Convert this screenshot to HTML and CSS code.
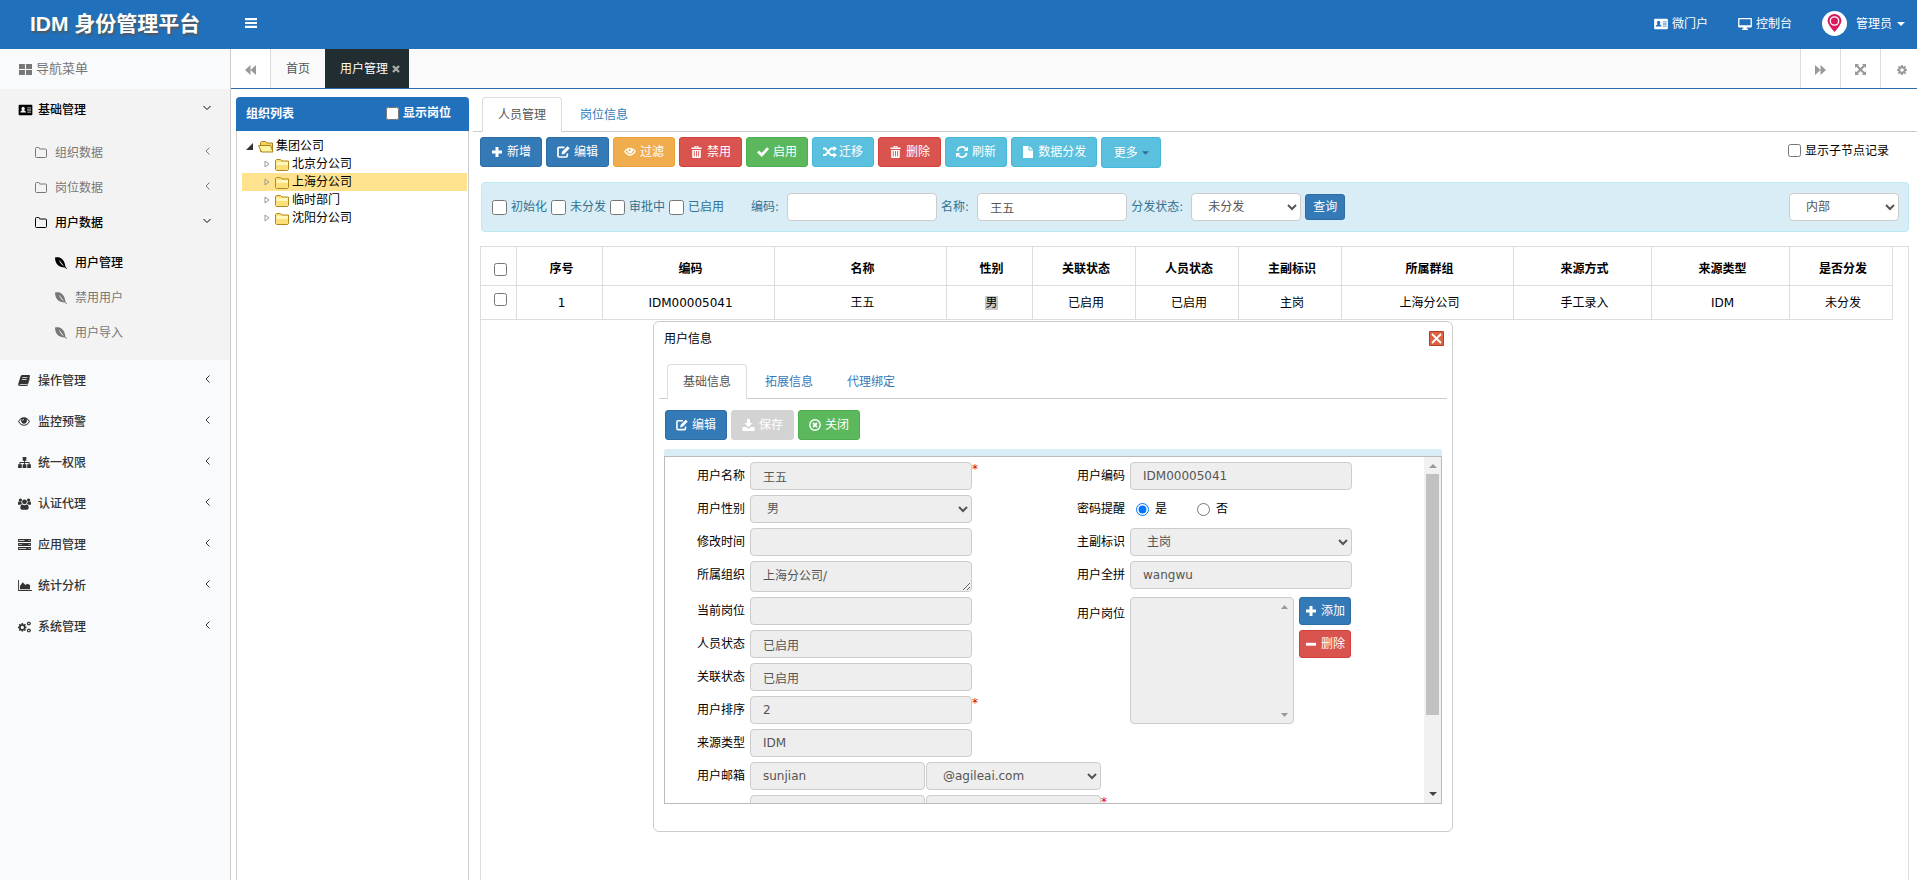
FILE: index.html
```html
<!DOCTYPE html>
<html lang="zh-CN">
<head>
<meta charset="utf-8">
<title>IDM 身份管理平台</title>
<link rel="stylesheet" href="styles.css">
</head>
<body>
<svg class="sprite" aria-hidden="true">
  <symbol id="card" viewBox="0 0 16 14"><path fill-rule="evenodd" d="M1 1h14a1 1 0 0 1 1 1v10a1 1 0 0 1-1 1H1a1 1 0 0 1-1-1V2a1 1 0 0 1 1-1zM2 10h6.500V9L7 7.500H6.500V7a2 2 0 1 0-2.500 0v.5h-.5L2 9zM10 4v1h4.500V4zM10 6.500v1h4.500v-1zM10 9v1h4.500V9z"/></symbol>
  <symbol id="screen" viewBox="0 0 16 14"><path fill-rule="evenodd" d="M1 0h14a1 1 0 0 1 1 1v9a1 1 0 0 1-1 1H10v1.500h1.500V14h-7v-1.500H6V11H1a1 1 0 0 1-1-1V1a1 1 0 0 1 1-1zM1.500 1.500v7h13v-7z"/></symbol>
  <symbol id="bars" viewBox="0 0 12 10"><path d="M0 0h12v2.200H0zM0 3.900h12v2.200H0zM0 7.800h12V10H0z"/></symbol>
  <symbol id="tiles" viewBox="0 0 12 10"><path d="M0 0h5.500v4.500H0zM6.500 0H12v4.500H6.500zM0 5.500h5.500V10H0zM6.500 5.500H12V10H6.500z"/></symbol>
  <symbol id="folder" viewBox="0 0 12 11"><path fill="none" stroke="currentColor" d="M.5 9.500v-8q0-1 1-1h2q1 0 1 1v.5h6q1 0 1 1v6.500q0 1-1 1h-9q-1 0-1-1z"/></symbol>
  <symbol id="leaf" viewBox="0 0 12 12"><path fill-rule="evenodd" d="M0 .5C5-.5 9.500 1.500 10.500 10L12 11.500l-.5.5-1.700-1.500C4 10.500 0 7 0 .5zM4 2.500C4.600 5 6.200 7.700 9 9.500 7.800 7.500 5.500 4.500 4 2.500z"/></symbol>
  <symbol id="book" viewBox="0 0 14 13"><path fill-rule="evenodd" d="M5 0h8q1.400.4 1 1.500L11.500 10q-.4 1-1.500 1H2.200q-.6.300 0 .9h8.800l2.500-8 .4.600-2.600 8q-.3.500-1 .5H2Q-.4 12.500.1 10.500L3 1.500Q3.600 0 5 0zM5.300 2.600 5 3.600h5.800l.3-1zM4.600 5l-.3 1h5.800l.3-1z"/></symbol>
  <symbol id="eye" viewBox="0 0 14 10"><path fill-rule="evenodd" d="M0 5Q3 0 7 0t7 5q-3 5-7 5T0 5zm1.300 0Q3.500 8.800 7 8.800T12.700 5Q11.500 3 10 2.200a3.500 3.500 0 1 1-6 0Q2.400 3 1.300 5zM7 2a2 2 0 0 0-2 2h.9A1.100 1.100 0 0 1 7 2.900z"/></symbol>
  <symbol id="sitemap" viewBox="0 0 14 12"><path d="M5 0h4v4H7.500v1.500H12.500V8H14v4h-4V8h1.500V6.500h-4V8H9v4H5V8h1.500V6.500h-4V8H4v4H0V8h1.500V5.500h5V4H5z"/></symbol>
  <symbol id="group" viewBox="0 0 15 13"><circle cx="2.800" cy="2" r="1.900"/><circle cx="12.200" cy="2" r="1.900"/><circle cx="7.500" cy="4" r="2.800"/><path d="M0 7V5q0-1.500 1-1.500L3.800 4q0 1.500.9 2.500Q3.500 6.500 2.600 7.500H1Q0 7.500 0 7zM15 7V5q0-1.500-1-1.500L11.200 4q0 1.500-.9 2.500 1.200 0 2.100 1H14q1 0 1-.5zM2.700 11Q2.700 7 5 7q2.500 1.600 5 0 2.300 0 2.300 4 0 2-2 2H4.700q-2 0-2-2z"/></symbol>
  <symbol id="server" viewBox="0 0 14 12"><path fill-rule="evenodd" d="M0 0h14v3.300H0zM0 4.300h14v3.400H0zM0 8.700h14V12H0zM1 1.300v.8h6v-.8zM1 5.600v.8h3.500v-.8zM1 10v.8h8V10zM11.500 1.200v1h1v-1zM11.500 5.500v1h1v-1zM11.500 9.900v1h1v-1z"/></symbol>
  <symbol id="chart" viewBox="0 0 15 12"><path d="M0 0h1v11h14v1H0zM2 10V6.500L5 2.500l3 3L10 4l3 1.500V10z"/></symbol>
  <symbol id="gear" viewBox="0 0 12 12"><path fill-rule="evenodd" d="M5 0h2l.3 1.600 1 .4L9.700 1 11 2.300 10 3.700l.4 1L12 5v2l-1.600.3-.4 1L11 9.700 9.700 11l-1.400-1-1 .4L7 12H5l-.3-1.600-1-.4L2.300 11 1 9.700l1-1.400-.4-1L0 7V5l1.600-.3.4-1L1 2.300 2.300 1l1.400 1 1-.4zM6 3.800a2.200 2.200 0 1 0 0 4.400 2.200 2.200 0 0 0 0-4.400z"/></symbol>
  <symbol id="gears" viewBox="0 0 15 13"><use href="#gear" x="0" y="2" width="10" height="10"/><use href="#gear" x="10" y="0" width="5" height="5"/><use href="#gear" x="10" y="8" width="5" height="5"/></symbol>
  <symbol id="left" viewBox="0 0 6 8"><path fill="none" stroke="currentColor" d="M4.500.5 1 4l3.500 3.500"/></symbol>
  <symbol id="down" viewBox="0 0 8 6"><path fill="none" stroke="currentColor" d="M.5 1 4 4.500 7.500 1"/></symbol>
  <symbol id="back" viewBox="0 0 11 10"><path d="M5.500 0v10L0 5zM11 0v10L5.500 5z"/></symbol>
  <symbol id="forward" viewBox="0 0 11 10"><path d="M0 0v10l5.500-5zM5.500 0v10L11 5z"/></symbol>
  <symbol id="expand" viewBox="0 0 11 11"><path d="M0 0h4L2.800 1.200l2.700 2.900 2.700-2.900L7 0h4v4L9.800 2.800 6.900 5.500l2.900 2.700L11 7v4H7l1.200-1.200-2.700-2.900-2.700 2.900L4 11H0V7l1.200 1.200 2.900-2.700-2.900-2.700L0 4z"/></symbol>
  <symbol id="times" viewBox="0 0 8 8"><path stroke="currentColor" stroke-width="2.400" d="m1 1 6 6M7 1 1 7"/></symbol>
  <symbol id="caret" viewBox="0 0 8 4"><path d="M0 0h8L4 4z"/></symbol>
  <symbol id="plus" viewBox="0 0 12 12"><path d="M4.500 1h3v3.500H11v3H7.500V11h-3V7.500H1v-3h3.500z"/></symbol>
  <symbol id="minus" viewBox="0 0 12 12"><path d="M1 4.800h10v2.900H1z"/></symbol>
  <symbol id="edit" viewBox="0 0 13 12"><path fill="none" stroke="currentColor" stroke-width="1.700" d="M7.500 1.300H2.300Q1 1.300 1 2.600v7.200Q1 11 2.300 11H9q1.300 0 1.300-1.200V7.500"/><path d="M5 5.800 10.500.2 12.800 2.300 7.200 8 4.500 8.600z"/></symbol>
  <symbol id="eyeopen" viewBox="0 0 13 12"><path fill-rule="evenodd" d="M0 5.500Q3 1.500 6.500 1.500T13 5.500Q10 10 6.500 10T0 5.500zm1.600 0Q4 8.500 6.500 8.500t4.900-3Q10.500 4.300 9.300 3.600a3 3 0 1 1-5.600 0Q2.600 4.300 1.600 5.500zM6.500 2.600a1.500 1.500 0 0 0-1.300 2.200l1.600.3.300-2z"/></symbol>
  <symbol id="trash" viewBox="0 0 12 12"><path fill-rule="evenodd" d="M4 1.500V0h4v1.500h3V3H1V1.500zM5 .8v.7h2V.8zM1.700 4h8.600v7q0 1-1 1H2.700q-1 0-1-1zM3.300 5v5.500h.9V5zM5.500 5v5.500h.9V5zM7.700 5v5.500h.9V5z"/></symbol>
  <symbol id="check" viewBox="0 0 12 12"><path d="M0 6.500 2 4.600l2.700 2.500L10 1.300l2 1.800L4.800 11z"/></symbol>
  <symbol id="shuffle" viewBox="0 0 14 12"><path fill="none" stroke="currentColor" stroke-width="1.800" d="M0 2.500h2.500L8 9h3M0 9h2.500L8 2.500h3"/><path d="M10.500 0 14 2.500 10.500 5.500zM10.500 6.500 14 9l-3.500 3z"/></symbol>
  <symbol id="refresh" viewBox="0 0 12 12"><path fill="none" stroke="currentColor" stroke-width="1.700" d="M1.300 5A4.800 4.800 0 0 1 10 3M10.700 7A4.800 4.800 0 0 1 2 9"/><path d="M12 .5V5H7.500zM0 11.500V7h4.500z"/></symbol>
  <symbol id="file" viewBox="0 0 10 12"><path d="M0 0h5.500v4.500H10V12H0zM6.500 0 10 3.500H6.500z"/></symbol>
  <symbol id="save" viewBox="0 0 12 12"><path d="M4.500 0h3v4H10L6 8.200 2 4h2.500zM0 8h3.500L6 10l2.500-2H12v4H0z"/></symbol>
  <symbol id="remove" viewBox="0 0 12 12"><circle cx="6" cy="6" r="5.200" fill="none" stroke="currentColor" stroke-width="1.400"/><path stroke="currentColor" stroke-width="1.800" d="m4 4 4 4M8 4 4 8"/></symbol>
  <symbol id="yellow" viewBox="0 0 15 13"><path fill="#fbe07a" stroke="#b08a20" d="M.5 11.500v-9l1-1h4l1.500 1.500h6.500v8.500l-1 1h-11z"/><path fill="#fff7b8" d="M1.500 4h11.500v3H1.500z"/></symbol>
  <symbol id="yellowopen" viewBox="0 0 16 13"><path fill="#f3d25e" stroke="#a8841c" d="M2.500 11.500v-9l1-1h4L9 3h5.500v8.500z"/><path fill="#fff2a0" stroke="#a8841c" d="M.5 5.500h12l2.500 6.500H3.500z"/></symbol>
</svg>

<header class="topbar">
  <h1 class="brand">IDM 身份管理平台</h1>
  <button class="plain" aria-label="菜单"><svg width="12" height="10"><use href="#bars"/></svg></button>
  <nav class="toplinks">
    <a href="#"><svg width="14" height="12"><use href="#card"/></svg>微门户</a>
    <a href="#"><svg width="14" height="12"><use href="#screen"/></svg>控制台</a>
    <a href="#" class="account">
      <svg width="25" height="25" viewBox="0 0 25 25"><circle cx="12.500" cy="12.500" r="12.500" fill="#fff"/><path fill="#d81b60" d="M12.500 21Q6 14 5.500 10a7 7 0 0 1 14 0Q19 14 12.500 21z"/><circle cx="12.500" cy="10" r="4.200" fill="none" stroke="#fff" stroke-width="1.300"/></svg>
      管理员<svg width="8" height="4"><use href="#caret"/></svg></a>
  </nav>
</header>

<div class="shell">
  <aside class="sidebar">
    <h2 class="navhead"><svg width="13" height="11"><use href="#tiles"/></svg>导航菜单</h2>
    <div class="open">
      <a href="#" class="item on"><svg width="15" height="12"><use href="#card"/></svg>基础管理<svg class="arrow" width="8" height="6"><use href="#down"/></svg></a>
      <div class="sub">
        <a href="#" class="item"><svg width="12" height="11"><use href="#folder"/></svg>组织数据<svg class="arrow" width="6" height="8"><use href="#left"/></svg></a>
        <a href="#" class="item"><svg width="12" height="11"><use href="#folder"/></svg>岗位数据<svg class="arrow" width="6" height="8"><use href="#left"/></svg></a>
        <a href="#" class="item on"><svg width="12" height="11"><use href="#folder"/></svg>用户数据<svg class="arrow" width="8" height="6"><use href="#down"/></svg></a>
        <div class="sub deep">
          <a href="#" class="item on"><svg width="12" height="12"><use href="#leaf"/></svg>用户管理</a>
          <a href="#" class="item"><svg width="12" height="12"><use href="#leaf"/></svg>禁用用户</a>
          <a href="#" class="item"><svg width="12" height="12"><use href="#leaf"/></svg>用户导入</a>
        </div>
      </div>
    </div>
    <a href="#" class="item"><svg width="12" height="11"><use href="#book"/></svg>操作管理<svg class="arrow" width="6" height="8"><use href="#left"/></svg></a>
    <a href="#" class="item"><svg width="12" height="9"><use href="#eye"/></svg>监控预警<svg class="arrow" width="6" height="8"><use href="#left"/></svg></a>
    <a href="#" class="item"><svg width="13" height="11"><use href="#sitemap"/></svg>统一权限<svg class="arrow" width="6" height="8"><use href="#left"/></svg></a>
    <a href="#" class="item"><svg width="13" height="12"><use href="#group"/></svg>认证代理<svg class="arrow" width="6" height="8"><use href="#left"/></svg></a>
    <a href="#" class="item"><svg width="13" height="11"><use href="#server"/></svg>应用管理<svg class="arrow" width="6" height="8"><use href="#left"/></svg></a>
    <a href="#" class="item"><svg width="14" height="11"><use href="#chart"/></svg>统计分析<svg class="arrow" width="6" height="8"><use href="#left"/></svg></a>
    <a href="#" class="item"><svg width="13" height="12"><use href="#gears"/></svg>系统管理<svg class="arrow" width="6" height="8"><use href="#left"/></svg></a>
  </aside>

  <div class="work">
    <div class="pagetabs">
      <button class="square first" aria-label="向左"><svg width="11" height="10"><use href="#back"/></svg></button>
      <a href="#" class="ptab">首页</a>
      <a href="#" class="ptab on">用户管理<svg width="8" height="8"><use href="#times"/></svg></a>
      <span class="fill"></span>
      <button class="square" aria-label="向右"><svg width="11" height="10"><use href="#forward"/></svg></button>
      <button class="square" aria-label="全屏"><svg width="11" height="11"><use href="#expand"/></svg></button>
      <button class="square last" aria-label="设置"><svg width="10" height="10"><use href="#gear"/></svg></button>
    </div>

    <div class="panes">
      <section class="tree">
        <div class="treehead"><span>组织列表</span><label><input type="checkbox">显示岗位</label></div>
        <ul class="nodes">
          <li class="root"><svg width="7" height="7"><path fill="#333" d="M7 0v7H0z"/></svg><svg width="16" height="13"><use href="#yellowopen"/></svg>集团公司</li>
          <li><svg width="6" height="8"><path fill="#fff" stroke="#999" d="M1 1v6l4-3z"/></svg><svg width="15" height="13"><use href="#yellow"/></svg>北京分公司</li>
          <li class="picked"><svg width="6" height="8"><path fill="none" stroke="#999" d="M1 1v6l4-3z"/></svg><svg width="15" height="13"><use href="#yellow"/></svg>上海分公司</li>
          <li><svg width="6" height="8"><path fill="#fff" stroke="#999" d="M1 1v6l4-3z"/></svg><svg width="15" height="13"><use href="#yellow"/></svg>临时部门</li>
          <li><svg width="6" height="8"><path fill="#fff" stroke="#999" d="M1 1v6l4-3z"/></svg><svg width="15" height="13"><use href="#yellow"/></svg>沈阳分公司</li>
        </ul>
      </section>

      <main class="main">
        <nav class="tabs"><a href="#" class="on">人员管理</a><a href="#">岗位信息</a></nav>
        <div class="toolbar">
          <button class="btn blue"><svg width="12" height="12"><use href="#plus"/></svg>新增</button>
          <button class="btn blue"><svg width="13" height="12"><use href="#edit"/></svg>编辑</button>
          <button class="btn orange"><svg width="12" height="12"><use href="#eyeopen"/></svg>过滤</button>
          <button class="btn red"><svg width="13" height="12"><use href="#trash"/></svg>禁用</button>
          <button class="btn green"><svg width="12" height="12"><use href="#check"/></svg>启用</button>
          <button class="btn cyan"><svg class="wide" width="14" height="12"><use href="#shuffle"/></svg>迁移</button>
          <button class="btn red"><svg width="13" height="12"><use href="#trash"/></svg>删除</button>
          <button class="btn cyan"><svg width="12" height="12"><use href="#refresh"/></svg>刷新</button>
          <button class="btn cyan"><svg width="12" height="12"><use href="#file"/></svg>数据分发</button>
          <button class="btn cyan more">更多<svg width="7" height="4"><use href="#caret"/></svg></button>
          <label class="children"><input type="checkbox">显示子节点记录</label>
        </div>
        <form class="filter">
          <label class="tick"><input type="checkbox">初始化</label>
          <label class="tick"><input type="checkbox">未分发</label>
          <label class="tick"><input type="checkbox">审批中</label>
          <label class="tick"><input type="checkbox">已启用</label>
          <label class="lead cap" for="code">编码:</label><input id="code" class="ctl mid" type="text">
          <label class="cap" for="name">名称:</label><input id="name" class="ctl mid" type="text" value="王五">
          <label class="cap" for="state">分发状态:</label><select id="state" class="ctl short"><option>未分发</option></select>
          <button type="button" class="btn blue small">查询</button>
          <select class="ctl short scope" aria-label="范围"><option>内部</option></select>
        </form>
        <div class="gridbox">
          <table class="grid">
            <colgroup><col class="c0"><col class="c1"><col class="c3"><col class="c3"><col class="c1"><col class="c2"><col class="c2"><col class="c2"><col class="c3"><col class="c4"><col class="c4"><col class="c2"></colgroup>
            <thead><tr><th><input type="checkbox" aria-label="全选"></th><th>序号</th><th>编码</th><th>名称</th><th>性别</th><th>关联状态</th><th>人员状态</th><th>主副标识</th><th>所属群组</th><th>来源方式</th><th>来源类型</th><th>是否分发</th></tr></thead>
            <tbody><tr><td><input type="checkbox" aria-label="选择"></td><td>1</td><td>IDM00005041</td><td>王五</td><td><span class="marked">男</span></td><td>已启用</td><td>已启用</td><td>主岗</td><td>上海分公司</td><td>手工录入</td><td>IDM</td><td>未分发</td></tr></tbody>
          </table>
        </div>

        <div class="dialog" role="dialog" aria-label="用户信息">
          <div class="dtitle"><span>用户信息</span>
            <button class="plain" aria-label="关闭"><svg width="15" height="15" viewBox="0 0 15 15"><rect width="15" height="15" rx="1" fill="#b83c22"/><rect x="1" y="1" width="13" height="13" fill="#dc6243"/><path stroke="#fff" stroke-width="1.800" d="m3 3 9 9M12 3l-9 9"/></svg></button></div>
          <nav class="tabs"><a href="#" class="on">基础信息</a><a href="#">拓展信息</a><a href="#">代理绑定</a></nav>
          <div class="dtools">
            <button class="btn blue"><svg width="12" height="12"><use href="#edit"/></svg>编辑</button>
            <button class="btn gray"><svg width="13" height="12"><use href="#save"/></svg>保存</button>
            <button class="btn green"><svg width="12" height="12"><use href="#remove"/></svg>关闭</button>
          </div>
          <div class="strip"></div>
          <div class="scroller">
            <form class="fields">
              <div class="col">
                <div class="row"><label for="f1">用户名称</label><input id="f1" class="ctl full" readonly value="王五"><i>*</i></div>
                <div class="row"><label for="f2">用户性别</label><select id="f2" class="ctl full" disabled><option>男</option></select></div>
                <div class="row"><label for="f3">修改时间</label><input id="f3" class="ctl full" readonly></div>
                <div class="row"><label for="f4">所属组织</label><textarea id="f4" class="ctl full" readonly>上海分公司/</textarea></div>
                <div class="row"><label for="f5">当前岗位</label><input id="f5" class="ctl full" readonly></div>
                <div class="row"><label for="f6">人员状态</label><input id="f6" class="ctl full" readonly value="已启用"></div>
                <div class="row"><label for="f7">关联状态</label><input id="f7" class="ctl full" readonly value="已启用"></div>
                <div class="row"><label for="f8">用户排序</label><input id="f8" class="ctl full" readonly value="2"><i>*</i></div>
                <div class="row"><label for="f9">来源类型</label><input id="f9" class="ctl full" readonly value="IDM"></div>
                <div class="row"><label for="f10">用户邮箱</label><input id="f10" class="ctl half" readonly value="sunjian"><select class="ctl half host" disabled aria-label="邮箱域名"><option>@agileai.com</option></select></div>
                <div class="row"><label></label><input class="ctl half" readonly aria-label="其他"><input class="ctl half host" readonly aria-label="其他"><i>*</i></div>
              </div>
              <div class="col">
                <div class="row"><label for="g1">用户编码</label><input id="g1" class="ctl full" readonly value="IDM00005041"></div>
                <div class="row radios"><label>密码提醒</label><label class="opt"><input type="radio" name="remind" checked>是</label><label class="opt"><input type="radio" name="remind">否</label></div>
                <div class="row"><label for="g2">主副标识</label><select id="g2" class="ctl full" disabled><option>主岗</option></select></div>
                <div class="row tall"><label for="g3">用户全拼</label><input id="g3" class="ctl full" readonly value="wangwu"></div>
                <div class="row"><label for="g4" class="low">用户岗位</label>
                  <div class="listwrap"><select id="g4" class="ctl list" multiple disabled></select>
                    <span class="ticks"><svg width="7" height="4"><path fill="#999" d="M0 4h7L3.500 0z"/></svg><svg width="7" height="4"><path fill="#999" d="M0 0h7L3.500 4z"/></svg></span></div>
                  <div class="pair"><button type="button" class="btn blue slim"><svg width="12" height="12"><use href="#plus"/></svg>添加</button><button type="button" class="btn red slim"><svg width="12" height="12"><use href="#minus"/></svg>删除</button></div>
                </div>
              </div>
            </form>
            <div class="bar"><svg width="8" height="5"><path fill="#999" d="M0 5h8L4 1z"/></svg><span class="thumb"></span><svg width="8" height="5"><path fill="#444" d="M0 0h8L4 4z"/></svg></div>
          </div>
        </div>
      </main>
    </div>
  </div>
</div>
</body>
</html>
```
FILE: styles.css
```css
* { box-sizing: border-box; }
body {
  margin: 0;
  height: 100vh;
  display: flex;
  flex-direction: column;
  overflow: hidden;
  font: 12px/18px "DejaVu Sans", "Noto Sans CJK SC", sans-serif;
  color: #000;
  background: #fff;
}
svg { fill: currentColor; flex: none; }
.sprite { position: absolute; width: 0; height: 0; }
a { color: inherit; text-decoration: none; }
button, input, select, textarea { font: inherit; }
button { cursor: pointer; }
input[type="checkbox"], input[type="radio"] { width: 13px; height: 13px; margin: 0; flex: none; }
.plain { border: 0; padding: 0; background: none; color: inherit; display: flex; }

/* top bar */
.topbar { display: flex; align-items: center; height: 49px; flex: none; background: #2170bb; color: #fff; }
.topbar .plain { margin-bottom: 4px; }
.brand { width: 245px; margin: 0; padding: 0 0 2px 30px; font: bold 21px/30px "Liberation Sans", "Noto Sans CJK SC", sans-serif; text-shadow: 1px 2px 2px #555; }
.toplinks { margin-left: auto; display: flex; align-items: center; gap: 30px; padding: 0 12px 2px 0; }
.toplinks a { display: flex; align-items: center; gap: 4px; }
.toplinks .account { gap: 5px; }
.account svg:first-child { margin-right: 4px; }

/* side menu */
.shell { flex: 1; display: flex; min-height: 0; }
.sidebar { width: 231px; flex: none; background: #f8fafc; border-right: 1px solid #ccc; color: #333; font-weight: 500; }
.navhead { display: flex; align-items: center; gap: 4px; height: 40px; margin: 0; padding-left: 19px; font-size: 13px; font-weight: 400; color: #777; }
.open { background: #f3f3f3; padding-bottom: 5px; }
.item { display: grid; grid-template-columns: 20px 1fr auto; align-items: center; height: 41px; padding: 0 19px 0 18px; }
.arrow { justify-self: end; margin-bottom: 4px; }
.sub { padding-top: 5px; }
.sub .item { height: 35px; padding-left: 35px; color: #777; font-weight: 400; }
.deep { padding-bottom: 5px; }
.deep .item { padding-left: 55px; }
.item.on, .sub .item.on { color: #000; font-weight: 500; }

/* page tabs */
.work { flex: 1; min-width: 0; display: flex; flex-direction: column; }
.pagetabs { display: flex; height: 40px; flex: none; border-bottom: 1px solid #2a6ca8; background: #fafafa; }
.square { width: 40px; border: 0; border-left: 1px solid #ddd; padding: 2px 0 0; background: #fff; color: #999; display: flex; align-items: center; justify-content: center; }
.square.first { border-left: 0; border-right: 1px solid #ddd; }
.square.last { width: 37px; padding-left: 6px; }
.ptab { display: flex; align-items: center; padding: 0 15px; color: #555; }
.ptab.on { gap: 4px; padding-right: 9px; background: #222d32; color: #fff; }
.ptab.on svg { color: #aaa; }
.fill { flex: 1; }
.panes { flex: 1; display: flex; min-height: 0; padding: 8px 0 0 5px; }

/* organisation tree */
.tree { width: 233px; flex: none; border: 1px solid #ccc; border-top: 0; border-bottom: 0; border-radius: 4px 4px 0 0; }
.treehead { display: flex; align-items: center; justify-content: space-between; height: 34px; margin: 0 -1px; padding: 0 18px 0 10px; border-radius: 4px 4px 0 0; background: #2170bb; color: #fff; font-weight: 700; }
.treehead label { display: flex; align-items: center; gap: 4px; padding-bottom: 2px; }
.nodes { list-style: none; margin: 0; padding: 6px 1px 0 5px; }
.nodes li { display: flex; align-items: center; gap: 2px; height: 18px; padding-left: 22px; }
.nodes svg:first-child { margin-right: 3px; }
.nodes .root { padding-left: 4px; }
.nodes .picked { background: #ffe28d; }

/* main pane */
.main { position: relative; flex: 1; min-width: 0; display: flex; flex-direction: column; margin-left: 4px; }
.tabs { display: flex; gap: 2px; border-bottom: 1px solid #ccc; padding-left: 9px; }
.tabs a { padding: 8px 15px 7px; border: 1px solid transparent; border-bottom: 0; border-radius: 4px 4px 0 0; color: #337ab7; }
.tabs .on { color: #555; border-color: #ddd; background: #fff; margin-bottom: -1px; padding-bottom: 8px; }
.toolbar { display: flex; gap: 4px; padding: 5px 28px 14px 7px; }
.btn { display: inline-flex; align-items: center; justify-content: center; gap: 4px; height: 30px; padding: 0 10px; border: 1px solid; border-radius: 3px; color: #fff; white-space: nowrap; flex: none; }
.blue { background: #337ab7; border-color: #2e6da4; }
.orange { background: #f0ad4e; border-color: #eea236; }
.red { background: #d9534f; border-color: #d43f3a; }
.green { background: #5cb85c; border-color: #4cae4c; }
.cyan { background: #5bc0de; border-color: #46b8da; }
.gray { background: #d3d3d3; border-color: #d3d3d3; }
.wide { margin-right: -2px; }
.more { width: 60px; height: 31px; }
.more svg { color: #31708f; }
.children { display: flex; align-items: center; gap: 4px; margin: 0 0 4px auto; }
.filter { display: flex; align-items: center; gap: 4px; margin: 0 8px 14px; padding: 0 9px 0 10px; height: 50px; flex: none; border: 1px solid #bce8f1; border-radius: 4px; background: #d9edf7; color: #31708f; }
.tick { display: flex; align-items: center; gap: 4px; }
.tick input[type="checkbox"] { width: 15px; height: 15px; }
.cap { margin-right: 4px; }
.lead { margin-left: 23px; }
.ctl { height: 28px; padding: 0 12px; border: 1px solid #ccc; border-radius: 4px; background: #fff; color: #555; opacity: 1; min-width: 0; flex: none; }
.mid { width: 150px; }
.short { width: 110px; }
.scope { margin-left: auto; }
.small { height: 26px; padding: 0 7px; }
.gridbox { flex: 1; margin: 0 8px; padding-right: 16px; border: 1px solid #ddd; border-bottom: 0; margin-left: 7px; }
.grid { width: 100%; table-layout: fixed; border-collapse: collapse; margin: -1px; }
.grid th, .grid td { border: 1px solid #ddd; padding: 0 0 0 4px; height: 34px; text-align: center; }
.grid th { height: 39px; padding-top: 6px; }
.grid input { vertical-align: middle; }
.grid td input { margin-bottom: 6px; }
.c0 { width: 36px; }
.c1 { width: 86px; }
.c2 { width: 103px; }
.c3 { width: 172px; }
.c4 { width: 138px; }
.marked { background: #c8c8c8; }

/* user dialog */
.dialog { position: absolute; top: 224px; left: 180px; width: 800px; padding: 0 5px 27px; border: 1px solid #ccc; border-radius: 6px; background: #fff; }
.dtitle { display: flex; align-items: center; justify-content: space-between; height: 33px; padding: 0 3px 0 5px; }
.dialog .tabs { margin-top: 9px; padding-left: 8px; }
.dtools { display: flex; gap: 4px; padding: 11px 6px 9px; }
.strip { height: 7px; margin: 0 5px; background: #d9edf7; border-radius: 3px 3px 0 0; }
.scroller { display: flex; height: 348px; margin: 0 5px; border: 1px solid #bbb; overflow: hidden; }
.fields { flex: 1; display: grid; grid-template-columns: 380px 1fr; padding: 5px 0 0 32px; }
.col { display: flex; flex-direction: column; gap: 5px; }
.row { display: flex; align-items: flex-start; }
.row label:first-child { width: 48px; margin-right: 5px; line-height: 28px; flex: none; }
.row .low { padding-top: 3px; }
.row i { color: #d00; font-style: normal; line-height: 14px; }
.row .ctl { background: #eee; }
.full { width: 222px; }
.half { width: 175px; }
.host { margin-left: 1px; }
.row textarea { height: 31px; padding-top: 5px; line-height: 18px; overflow: hidden; resize: both; display: block; }
.radios { height: 28px; }
.opt { display: flex; align-items: center; gap: 6px; height: 28px; margin: 0 24px 0 6px; }
.row.tall { height: 31px; }
.listwrap { position: relative; }
.list { display: block; width: 164px; height: 127px; }
.ticks { position: absolute; inset: 8px 6px 7px auto; display: flex; flex-direction: column; justify-content: space-between; }
.pair { display: flex; flex-direction: column; gap: 5px; margin-left: 5px; }
.slim { height: 28px; padding: 0 5px; }
.bar { width: 17px; flex: none; display: flex; flex-direction: column; align-items: center; padding: 6px 0; background: #f1f1f1; }
.thumb { width: 13px; height: 241px; margin: 6px 0 auto; background: #c1c1c1; }
```
